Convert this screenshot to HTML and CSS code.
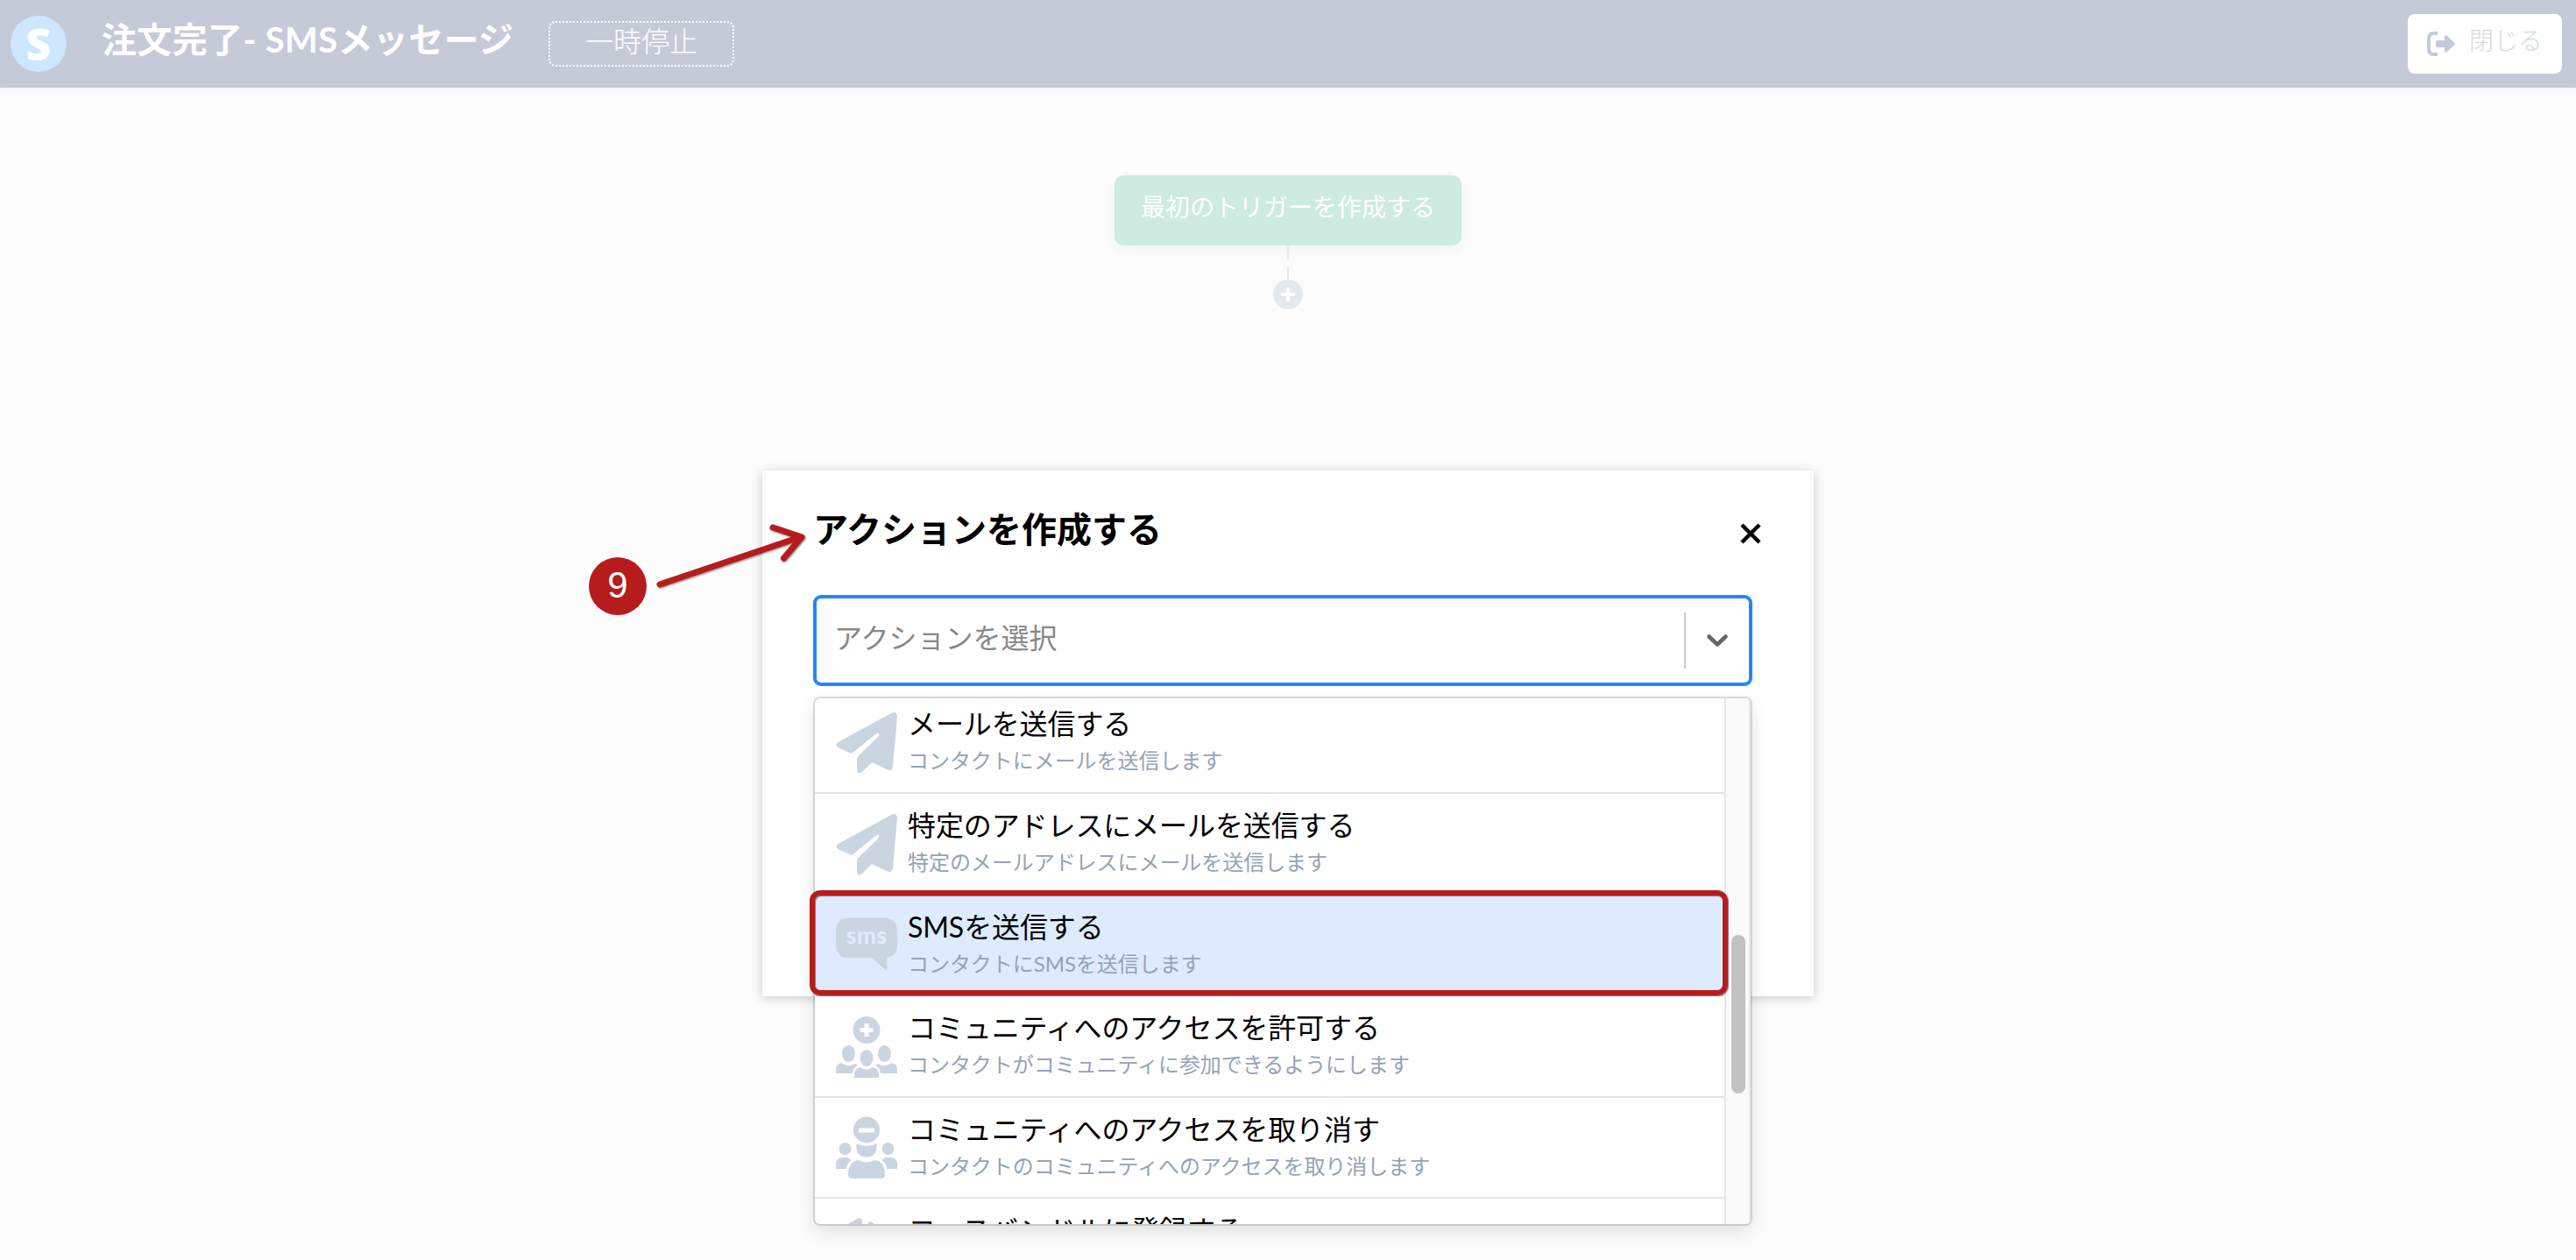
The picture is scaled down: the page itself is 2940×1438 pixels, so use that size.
FILE: index.html
```html
<!DOCTYPE html>
<html lang="ja">
<head>
  <meta charset="UTF-8" />
  <title>注文完了- SMSメッセージ</title>
  <link rel="stylesheet" href="styles.css">
</head>
<body>
  <header>
    <div class="logo">S</div>
    <h1>注文完了- SMSメッセージ</h1>
    <button class="pause"><span>一時停止</span></button>
    <button class="exit">
      <svg width="32" height="28" viewBox="0 0 32 28">
        <path d="M12 2H8Q2 2 2 8V20Q2 26 8 26H12" fill="none" stroke="#c5cad9" stroke-width="4" stroke-linecap="butt"/>
        <path d="M12 10H20V6Q20 3 23 5L31 12.500Q32.500 14 31 15.500L23 23Q20 25 20 22V18H12Q10 18 10 16V12Q10 10 12 10Z" fill="#c5cad9"/>
      </svg>
      <span>閉じる</span>
    </button>
  </header>

  <main>
    <div class="trigger"><span>最初のトリガーを作成する</span></div>
    <div class="line first"></div>
    <div class="line"></div>
    <div class="plus">
      <svg width="34" height="34"><path d="M17 9V25M9 17H25" stroke="#fff" stroke-width="4"/></svg>
    </div>
  </main>

  <div class="modal">
    <div class="modal-head">
      <h2>アクションを作成する</h2>
      <svg width="24" height="24"><path d="M2 2L22 22M22 2L2 22" stroke="#000" stroke-width="4.500"/></svg>
    </div>
    <div class="select">
      <span class="placeholder">アクションを選択</span>
      <div class="separator"></div>
      <svg width="24" height="14"><path d="M2.500 2.500L12 11.500L21.500 2.500" fill="none" stroke="#666" stroke-width="4.500" stroke-linecap="round" stroke-linejoin="round"/></svg>
    </div>

    <div class="menu">
      <div class="options">
        <div class="option">
          <svg class="icon" viewBox="0 0 70 70"><path d="M64 0.500Q70 -1.500 70 5L65 62Q64 67.500 59 65.500L41 57L30 68Q24 72 24 64V54Q24 52 25.500 50L49 27Q50 23 46.500 24L18 47L3 40.500Q-2 37 2.500 34Z"/></svg>
          <div class="texts">
            <p class="name">メールを送信する</p>
            <p class="desc">コンタクトにメールを送信します</p>
          </div>
        </div>
        <div class="option">
          <svg class="icon" viewBox="0 0 70 70"><path d="M64 0.500Q70 -1.500 70 5L65 62Q64 67.500 59 65.500L41 57L30 68Q24 72 24 64V54Q24 52 25.500 50L49 27Q50 23 46.500 24L18 47L3 40.500Q-2 37 2.500 34Z"/></svg>
          <div class="texts">
            <p class="name">特定のアドレスにメールを送信する</p>
            <p class="desc">特定のメールアドレスにメールを送信します</p>
          </div>
        </div>
        <div class="option focused">
          <svg class="icon" viewBox="0 0 70 70">
            <path d="M16 2.500H54Q70 2.500 70 18V33Q70 46 58.500 48V63.500L41 48.500H16Q0 48.500 0 33V18Q0 2.500 16 2.500Z"/>
            <text x="35" y="32" textLength="46">sms</text>
          </svg>
          <div class="texts">
            <p class="name">SMSを送信する</p>
            <p class="desc">コンタクトにSMSを送信します</p>
          </div>
        </div>
        <div class="option">
          <svg class="icon" viewBox="0 0 70 70">
            <circle cx="35" cy="15.500" r="15.500"/>
            <path class="cut" d="M35 8V23M27.500 15.500H42.500"/>
            <ellipse cx="14.500" cy="42.500" rx="7.500" ry="9.500"/>
            <ellipse cx="55.500" cy="42.500" rx="7.500" ry="9.500"/>
            <ellipse cx="35" cy="47.500" rx="7.500" ry="9.500"/>
            <path d="M0 65V61Q0 54 6 53Q14 59 22 54Q24 55 25 56Q20 58 19 65ZM70 65V61Q70 54 64 53Q56 59 48 54Q46 55 45 56Q50 58 51 65ZM21 70V66Q21 59 28 58Q35 63.500 42 58Q49 59 49 66V70Z"/>
          </svg>
          <div class="texts">
            <p class="name">コミュニティへのアクセスを許可する</p>
            <p class="desc">コンタクトがコミュニティに参加できるようにします</p>
          </div>
        </div>
        <div class="option">
          <svg class="icon" viewBox="0 0 70 70">
            <circle cx="35" cy="13.500" r="15"/>
            <path class="cut" d="M26 14H44"/>
            <path d="M23.500 29Q35 35 46.500 29Q48 44.500 35 44.500Q22 44.500 23.500 29Z"/>
            <circle cx="10.500" cy="35" r="7"/>
            <circle cx="59.500" cy="35" r="7"/>
            <path d="M0 58V53Q0 45 8 45H14L18 48Q12 52 12 58ZM70 58V53Q70 45 62 45H56L52 48Q58 52 58 58ZM19 69Q14 69 14 65Q14 49 26 48Q35 53 44 48Q56 49 56 65Q56 69 51 69Z"/>
          </svg>
          <div class="texts">
            <p class="name">コミュニティへのアクセスを取り消す</p>
            <p class="desc">コンタクトのコミュニティへのアクセスを取り消します</p>
          </div>
        </div>
        <div class="option">
          <svg class="icon" viewBox="0 0 70 70"><path d="M15 5L26 -1Q30 -1 30 3V20H8ZM37 4Q40 2 43 5L48 12H36Z"/></svg>
          <div class="texts">
            <p class="name">コースバンドルに登録する</p>
          </div>
        </div>
      </div>
      <div class="scrollbar"><div class="thumb"></div></div>
    </div>
  </div>

  <!-- step marker -->
  <div class="highlight"></div>
  <div class="step">9</div>
  <svg class="arrow" width="180" height="90"><path d="M13 67L173 13M142 2L175 13L154.500 37" transform="translate(0 10)"/></svg>
</body>
</html>
```

FILE: styles.css
```css
* {margin: 0; padding: 0; box-sizing: border-box;}
body {
  font-family: Lato, 'Noto Sans CJK JP', sans-serif;
  background: #fcfcfc;
  height: 1438px;
  overflow: hidden;
  position: relative;
}
button {
  font-family: inherit;
  background: none;
}
header {
  display: flex;
  align-items: center;
  height: 100px;
  padding: 0 16px 0 12px;
  background: #c5cad9;
  color: #fff;
  box-shadow: 0 2px 8px #eef2f6;
}
.logo {
  width: 64px;
  height: 64px;
  border-radius: 50%;
  background: #cce7ff;
  font: 800 50px/64px "Open Sans", sans-serif;
  text-align: center;
}
h1 {
  margin-left: 40px;
  width: 470px;
  font-size: 40px;
  letter-spacing: .35px;
  line-height: 60px;
  padding-bottom: 10px;
  white-space: nowrap;
}
.pause {
  width: 212px;
  height: 52px;
  margin-left: 40px;
  border: 2px dotted #fff;
  border-radius: 8px;
  color: #fff;
  font-size: 32px;
  font-weight: 300;
  line-height: 44px;
}
.pause span {
  display: block;
  margin-top: -6px;
}
.exit {
  display: flex;
  align-items: center;
  width: 176px;
  height: 68px;
  margin-left: auto;
  padding-left: 22px;
  gap: 16px;
  background: #fff;
  border: none;
  border-radius: 8px;
  color: #d6dae4;
  font-size: 28px;
  font-weight: 300;
}
.exit span {
  padding-bottom: 10px;
}
main {
  display: flex;
  flex-direction: column;
  align-items: center;
  padding-top: 100px;
}
.trigger {
  width: 396px;
  height: 80px;
  border-radius: 10px;
  background: #cdebe0;
  box-shadow: 0 4px 14px rgba(0,0,0,.05);
  color: #fff;
  font-size: 28px;
  line-height: 72px;
  text-align: center;
}
.line {
  width: 2px;
  height: 15px;
  background: #e5e8eb;
}
.line.first {
  height: 16px;
  margin-bottom: 8px;
}
.plus {
  width: 34px;
  height: 34px;
  border-radius: 50%;
  background: #e5e8eb;
}
.modal {
  position: absolute;
  left: 870px;
  top: 537px;
  width: 1200px;
  height: 600px;
  padding: 36px 58px;
  background: #fff;
  box-shadow: 0 2px 12px rgba(0,0,0,.2);
}
.modal-head {
  display: flex;
  align-items: center;
  justify-content: space-between;
  height: 72px;
  padding: 0 2px 0 0;
}
h2 {
  font-size: 40px;
  line-height: 60px;
  padding-bottom: 10px;
}
.select {
  display: flex;
  align-items: center;
  height: 104px;
  width: 1072px;
  margin-top: 34px;
  padding: 0 24px 0 20px;
  border: 4px solid #2684ff;
  border-radius: 9px;
}
.placeholder {
  flex: 1;
  color: #888;
  font-size: 32px;
  padding-bottom: 11px;
}
.separator {
  width: 2px;
  height: 64px;
  margin-right: 24px;
  background: #ccc;
}
.menu {
  position: absolute;
  left: 60px;
  top: 260px;
  display: flex;
  width: 1068px;
  height: 600px;
  overflow: hidden;
  border-radius: 6px;
  background: #fff;
  box-shadow: 0 0 0 2px rgba(0,0,0,.13), 0 8px 22px rgba(0,0,0,.12);
}
.options {
  flex: 1;
  margin-top: -6.600px;
}
.option {
  display: flex;
  height: 115.600px;
  padding: 0 24px;
  border-bottom: 2px solid #e6e6e6;
}
.option.focused {
  background: #deebff;
}
.icon {
  width: 70px;
  height: 70px;
  margin: 23px 12px 0 0;
  fill: #cbd5e1;
  overflow: visible;
}
.icon text {
  fill: #deebff;
  font: 900 26px Lato, sans-serif;
  text-anchor: middle;
}
.icon .cut {
  stroke: #fff;
  stroke-width: 5;
}
.name {
  margin-top: 12px;
  font-size: 32px;
  letter-spacing: -.1px;
  line-height: 48px;
}
.desc {
  color: #94a3b8;
  font-size: 24px;
  letter-spacing: -.05px;
  line-height: 35px;
}
.scrollbar {
  width: 30px;
  padding: 270px 4px 0 6px;
  background: #fafafa;
  border: solid #e8e8e8;
  border-width: 0 2px;
}
.thumb {
  width: 16px;
  height: 181px;
  border-radius: 8px;
  background: #c1c1c1;
}
.highlight {
  position: absolute;
  left: 924px;
  top: 1016px;
  width: 1048px;
  height: 120px;
  border: 6px solid #b71c1c;
  border-radius: 12px;
  box-shadow: 1px 1px 1px rgba(0,0,0,.5), inset 1px 1px 1px rgba(0,0,0,.5);
}
.step {
  position: absolute;
  left: 672px;
  top: 636px;
  width: 66px;
  height: 66px;
  border-radius: 50%;
  background: #b71c1c;
  color: #fff;
  font: 42px/64px "Liberation Sans", sans-serif;
  text-align: center;
}
.arrow {
  position: absolute;
  left: 740px;
  top: 590px;
  fill: none;
  stroke: #b71c1c;
  stroke-width: 7;
  stroke-linecap: round;
  stroke-linejoin: round;
  filter: drop-shadow(1px 1px 1px rgba(0,0,0,.5));
}
```
